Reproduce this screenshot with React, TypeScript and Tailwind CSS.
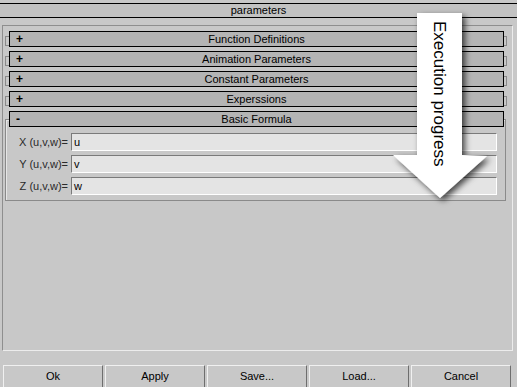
import React from 'react';

const rollouts = ['Function Definitions', 'Animation Parameters', 'Constant Parameters', 'Experssions'];

const fields = [
  { label: 'X (u,v,w)=', value: 'u' },
  { label: 'Y (u,v,w)=', value: 'v' },
  { label: 'Z (u,v,w)=', value: 'w' },
];

const buttons = ['Ok', 'Apply', 'Save...', 'Load...', 'Cancel'];

function RolloutHeader({ title, open }: { title: string; open?: boolean }) {
  return (
    <div className="relative z-10 flex h-[16px] items-center border border-black bg-[#b4b4b4]">
      <span className="absolute left-[6px] top-[-1px] text-[12px] font-bold leading-[16px]">{open ? '-' : '+'}</span>
      <span className="flex-1 text-center leading-[14px]">{title}</span>
    </div>
  );
}

export default function App() {
  return (
    <div
      className="relative h-[387px] w-[517px] overflow-hidden bg-[#c8c8c8] text-[11px] text-black"
      style={{ fontFamily: '"Liberation Sans", Arial, sans-serif' }}
    >
      {/* Title bar */}
      <div className="pt-[3px]">
        <div className="flex h-[15px] items-center justify-center border-y border-black bg-[#c2c2c2] leading-[13px]">
          parameters
        </div>
      </div>

      {/* Rollout panel */}
      <div className="ml-[2px] mt-[7px] h-[326px] w-[511px] border border-t-[#8e8e8e] border-l-[#8e8e8e] border-r-[#ececec] border-b-[#ececec] pt-[5px]">
        {rollouts.map((r) => (
          <div key={r} className="relative mb-[4px] ml-[6px] w-[495px]">
            <div className="absolute left-[-4px] right-[-3px] top-[5px] h-[10px] border border-[#8a8a8a]" />
            <RolloutHeader title={r} />
          </div>
        ))}

        {/* Basic Formula */}
        <div className="relative ml-[6px] w-[495px] pb-[6px]">
          <div className="absolute bottom-0 left-[-4px] right-[-2px] top-[8px] border border-[#8a8a8a] shadow-[inset_1px_1px_0_#e6e6e6]" />
          <RolloutHeader title="Basic Formula" open />
          <div className="relative flex flex-col gap-[4px] pt-[6px]">
            {fields.map((f) => (
              <div key={f.label} className="flex h-[18px] items-center">
                <span className="w-[62px] pr-[3px] text-right text-[#2a2a2a]">{f.label}</span>
                <div className="flex h-[18px] w-[426px] items-center border border-t-[#7a7a7a] border-l-[#7a7a7a] border-r-white border-b-white bg-[#e4e4e4] pl-[2px] leading-none">
                  {f.value}
                </div>
              </div>
            ))}
          </div>
        </div>
      </div>

      {/* Buttons */}
      <div className="mt-[14px] flex gap-[2px] pl-[3px]">
        {buttons.map((b) => (
          <div
            key={b}
            className="flex h-[23px] w-[100px] items-center justify-center border border-t-[#f0f0f0] border-l-[#f0f0f0] border-r-[#6e6e6e] border-b-[#6e6e6e] bg-[#c8c8c8]"
          >
            {b}
          </div>
        ))}
      </div>

      {/* Execution progress arrow overlay */}
      <svg className="pointer-events-none absolute left-0 top-0 z-20" width="517" height="387">
        <defs>
          <filter id="sh" x="-50%" y="-20%" width="200%" height="150%">
            <feDropShadow dx="3" dy="3" stdDeviation="3" floodColor="#000" floodOpacity="0.7" />
          </filter>
        </defs>
        <polygon
          points="417,13 462,13 462,155 487,156 440,198 393,155 417,155"
          fill="#ffffff"
          filter="url(#sh)"
        />
      </svg>
      <div
        className="absolute left-[429px] top-[21px] z-30 text-[17px] leading-[20px] text-black [writing-mode:vertical-rl]"
        style={{ fontFamily: '"Liberation Sans", Arial, sans-serif' }}
      >
        Execution progress
      </div>
    </div>
  );
}
